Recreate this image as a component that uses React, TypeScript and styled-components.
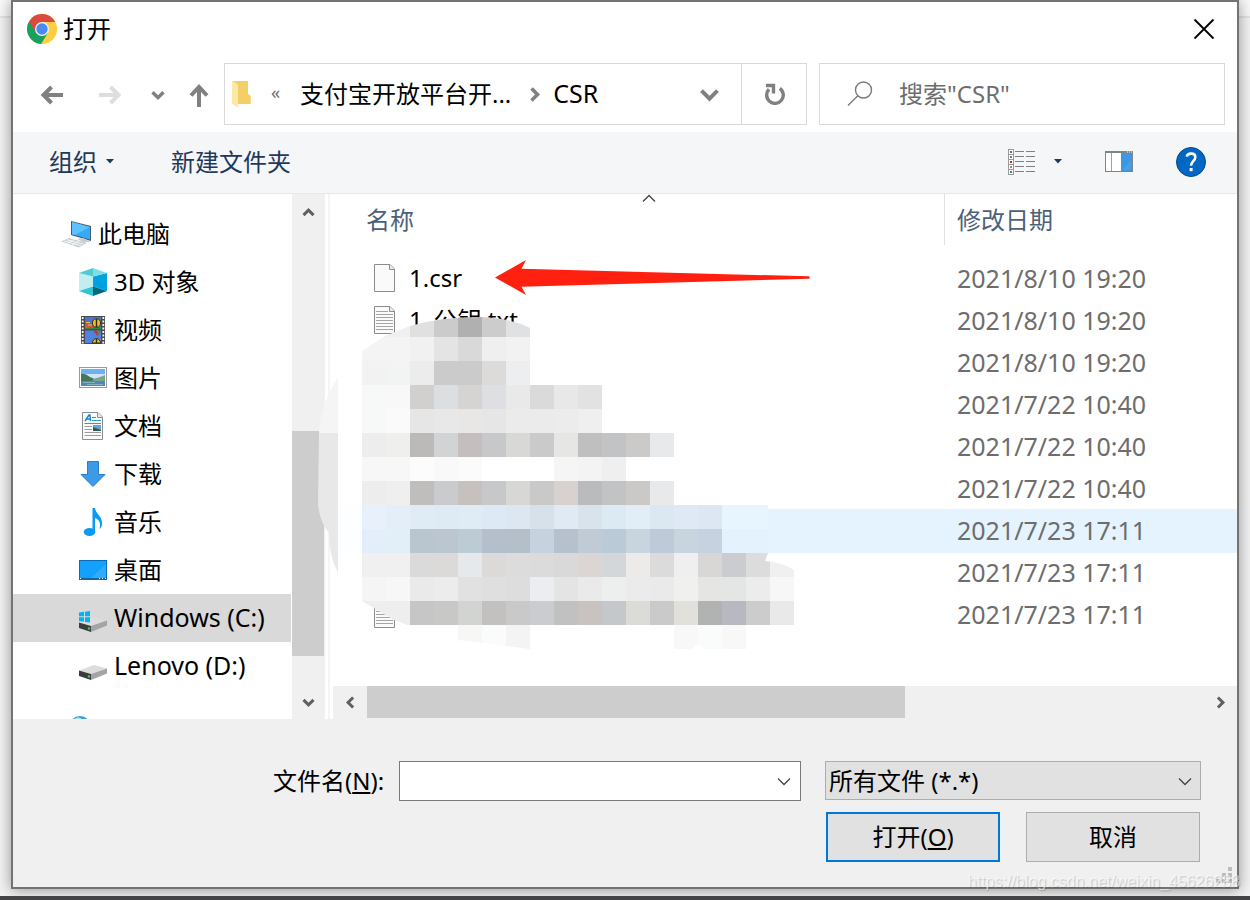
import React from "react";
import styled, { createGlobalStyle } from "styled-components";

const GlobalStyle = createGlobalStyle`
  * { box-sizing: border-box; }
  body {
    margin: 0;
    background: #f4f4f4;
    font-family: "Noto Sans", "Noto Sans CJK SC", sans-serif;
    font-size: 24px;
    line-height: 32px;
    color: #000;
  }
  button, input, select { font: inherit; color: inherit; margin: 0; border-radius: 0; }
  button { padding: 0; border: 0; background: none; }
  svg { display: block; flex: none; }
`;

const Page = styled.div`
  position: relative;
  display: flex;
  flex-direction: column;
  height: 100vh;
  padding: 0 11px 7px;
  border-bottom: 4px solid #444446;
  background: linear-gradient(#f9f9f9 16px, #e4e4e4 16px, #e4e4e4 18px, #f3f3f3 18px);
  overflow: hidden;
`;

const Dialog = styled.section`
  flex: 1;
  min-height: 0;
  display: flex;
  flex-direction: column;
  border: 2px solid #737373;
  background: #fff;
  box-shadow: 0 1px 14px rgba(0, 0, 0, 0.4);
`;

const TitleBar = styled.header`
  display: flex;
  align-items: center;
  gap: 6px;
  height: 54px;
  padding: 0 22px 0 14px;
`;

const Title = styled.h1`
  flex: 1;
  margin: 0;
  font-size: 24px;
  font-weight: 400;
`;

const NavBar = styled.nav`
  display: flex;
  align-items: center;
  margin: 7px 0;
  padding: 0 12px 0 10px;
`;

const NavButton = styled.button<{ $width: number }>`
  display: flex;
  align-items: center;
  justify-content: center;
  width: ${(p) => p.$width}px;
  height: 62px;
  padding-top: 2px;
`;

const AddressBar = styled.div`
  flex: 1;
  display: flex;
  align-items: center;
  height: 62px;
  margin: 0 12px 0 3px;
  padding-left: 7px;
  border: 1px solid #d9d9d9;
`;

const Overflow = styled.button`
  width: 49px;
  padding-bottom: 4px;
  font-size: 18px;
  color: #6d6d6d;
`;

const Crumb = styled.button<{ $latin?: boolean }>`
  font-size: ${(p) => (p.$latin ? 25 : 24)}px;
  line-height: ${(p) => (p.$latin ? 30 : 32)}px;
  padding-bottom: ${(p) => (p.$latin ? 2 : 0)}px;
  white-space: nowrap;
`;

const CrumbArrow = styled.span`
  display: flex;
  justify-content: center;
  width: 42px;
  padding-left: 4px;
`;

const AddressDrop = styled.button`
  margin-left: auto;
  padding: 22px;
`;

const Refresh = styled.button`
  display: flex;
  align-items: center;
  justify-content: center;
  width: 65px;
  height: 60px;
  border-left: 1px solid #d9d9d9;
`;

const SearchBox = styled.label`
  display: flex;
  align-items: center;
  gap: 26px;
  width: 34%;
  max-width: 406px;
  height: 62px;
  padding-left: 27px;
  border: 1px solid #d9d9d9;
`;

const SearchInput = styled.input`
  flex: 1;
  min-width: 0;
  padding: 0;
  border: 0;
  outline: 0;
  background: none;
  &::placeholder { color: #6d6d6d; opacity: 1; }
`;

const ToolBar = styled.div`
  display: flex;
  align-items: center;
  height: 62px;
  padding: 0 31px 2px 36px;
  border-bottom: 1px solid #e6e8ea;
  background: #f5f6f7;
  color: #1e395b;
`;

const ToolButton = styled.button<{ $gap: number }>`
  display: flex;
  align-items: center;
  gap: 9px;
  margin-right: ${(p) => p.$gap}px;
`;

const ToolSpacer = styled.span`
  flex: 1;
`;

const Body = styled.main`
  position: relative;
  flex: 1;
  min-height: 0;
  display: flex;
`;

const Sidebar = styled.ul`
  width: 279px;
  margin: 0;
  padding: 16px 1px 0 0;
  list-style: none;
  overflow: hidden;
`;

const TreeItem = styled.li<{ $root?: boolean; $selected?: boolean; $latin?: boolean }>`
  display: flex;
  align-items: center;
  gap: ${(p) => (p.$root ? 6 : 7)}px;
  height: 48px;
  padding-left: ${(p) => (p.$root ? 48 : 66)}px;
  background: ${(p) => (p.$selected ? "#d9d9d9" : "transparent")};
  font-size: ${(p) => (p.$latin ? 25 : 24)}px;
  white-space: nowrap;
`;

const NetworkItem = styled(TreeItem)`
  margin-top: 16px;
`;

const PlaceName = styled.span<{ $latin?: boolean }>`
  padding-bottom: ${(p) => (p.$latin ? 2 : 0)}px;
`;

const VScroll = styled.div`
  display: flex;
  flex-direction: column;
  width: 33px;
  background: #f0f0f0;
`;

const ScrollButton = styled.button<{ $tall?: boolean }>`
  display: flex;
  align-items: center;
  justify-content: center;
  flex: none;
  width: 34px;
  height: ${(p) => (p.$tall ? 36 : 33)}px;
`;

const VScrollButton = styled(ScrollButton)`
  width: 33px;
`;

const TrackPart = styled.div<{ $grow: number; $thumb?: boolean }>`
  flex: ${(p) => p.$grow} 0 0;
  background: ${(p) => (p.$thumb ? "#cdcdcd" : "transparent")};
`;

const VThumb = styled(TrackPart)`
  margin-right: 1px;
`;

const HThumb = styled(TrackPart)`
  margin-bottom: 1px;
`;

const Splitter = styled.div`
  width: 8px;
  border-left: 3px solid #fff;
  border-right: 3px solid #fff;
  background: #f5f5f5;
`;

const FilePane = styled.div`
  flex: 1;
  min-width: 0;
  display: flex;
  flex-direction: column;
`;

const TableArea = styled.div`
  flex: 1;
  min-height: 0;
  padding-left: 21px;
  overflow: hidden;
`;

const FileTable = styled.table`
  width: 100%;
  table-layout: fixed;
  border-collapse: separate;
  border-spacing: 0;
`;

const HeadCell = styled.th<{ $date?: boolean }>`
  position: relative;
  width: ${(p) => (p.$date ? "293px" : "auto")};
  height: 63px;
  padding: 0;
  vertical-align: top;
  text-align: left;
  font-weight: 400;
  color: #4c607a;
`;

const HeadLabel = styled.div<{ $date?: boolean }>`
  height: 51px;
  padding: 10px 0 0 12px;
  border-left: ${(p) => (p.$date ? "1px solid #e2e2e2" : "0")};
`;

const SortMark = styled.span`
  position: absolute;
  top: 0;
  left: 50%;
  margin-left: -7px;
`;

const FileRow = styled.tr<{ $hot?: boolean }>`
  background: ${(p) => (p.$hot ? "#e5f3ff" : "transparent")};
  box-shadow: ${(p) => (p.$hot ? "0 1px 0 1px #e5f3ff" : "none")};
`;

const Cell = styled.td<{ $date?: boolean }>`
  height: 42px;
  padding: 0 0 0 ${(p) => (p.$date ? 13 : 20)}px;
  font-size: ${(p) => (p.$date ? 25 : 24)}px;
  color: ${(p) => (p.$date ? "#6d6d6d" : "#000")};
`;

const FileName = styled.div`
  display: flex;
  align-items: center;
  gap: 13px;
`;

const HScroll = styled.div`
  display: flex;
  height: 33px;
  background: #f0f0f0;
`;

const Markup = styled.svg`
  position: absolute;
  top: 0;
  left: 0;
  pointer-events: none;
`;

const Footer = styled.form`
  position: relative;
  height: 168px;
  padding: 42px 36px 0 260px;
  background: #f0f0f0;
`;

const FieldRow = styled.div`
  display: flex;
  align-items: flex-start;
`;

const FieldLabel = styled.label`
  margin-right: 15px;
  line-height: 40px;
  white-space: nowrap;
`;

const NameBox = styled.div`
  flex: 1;
  display: flex;
  align-items: center;
  height: 40px;
  margin-right: 24px;
  padding-right: 9px;
  border: 1px solid #7a7a7a;
  background: #fff;
`;

const NameInput = styled.input`
  flex: 1;
  min-width: 0;
  border: 0;
  outline: 0;
  background: none;
`;

const TypeBox = styled.div`
  position: relative;
  width: 376px;
`;

const TypeSelect = styled.select`
  display: block;
  appearance: none;
  width: 100%;
  height: 39px;
  padding: 0 36px 0 3px;
  border: 1px solid #adadad;
  background: #e1e1e1;
`;

const TypeArrow = styled.span`
  position: absolute;
  top: 16px;
  right: 9px;
  pointer-events: none;
`;

const ButtonRow = styled.div`
  display: flex;
  justify-content: flex-end;
  gap: 26px;
  margin-top: 11px;
  padding-right: 1px;
`;

const PushButton = styled.button<{ $primary?: boolean }>`
  width: 174px;
  height: 50px;
  border: ${(p) => (p.$primary ? "2px solid #0078d7" : "1px solid #adadad")};
  background: #e1e1e1;
`;

const Grip = styled.svg`
  position: absolute;
  right: 5px;
  bottom: 4px;
`;

const Watermark = styled.span`
  position: absolute;
  right: 10px;
  bottom: 5px;
  font-family: "Liberation Sans", sans-serif;
  font-size: 16px;
  line-height: 18px;
  color: rgba(255, 255, 255, 0.6);
  text-shadow: 1px 1px 1px rgba(0, 0, 0, 0.18);
`;

const ChromeLogo = () => (
  <svg width="30" height="30" viewBox="0 0 30 30">
    <circle cx="15" cy="15" r="15" fill="#ffcd40" />
    <path d="M15 15 L2 7.500 A15 15 0 0 0 14 30 L21.500 18.500 Z" fill="#18a05e" />
    <path d="M2 7.500 A15 15 0 0 1 28.200 8 L15 8 L9 18.500 Z" fill="#db4a3f" />
    <path d="M15 8 H28.200 A15 15 0 0 1 14.500 30 L21 18.500 Z" fill="#ffcd40" />
    <circle cx="15" cy="15" r="7" fill="#f1f1f1" />
    <circle cx="15" cy="15" r="5.700" fill="#4a8af5" />
  </svg>
);

const ArrowLeft = ({ color, flip }: { color: string; flip?: boolean }) => (
  <svg width="24" height="20" viewBox="0 0 24 20" fill="none" stroke={color} strokeWidth="4">
    <path d={flip ? "M1 10 H20 M12.500 2 L20.500 10 L12.500 18" : "M23 10 H4 M11.500 2 L3.500 10 L11.500 18"} />
  </svg>
);

const ArrowUp = () => (
  <svg width="20" height="24" viewBox="0 0 20 24" fill="none" stroke="#808080" strokeWidth="4">
    <path d="M10 24 V5 M2 12.500 L10 4 L18 12.500" />
  </svg>
);

type Dir = "up" | "down" | "left" | "right";
const angle: Record<Dir, number> = { down: 0, left: 90, up: 180, right: 270 };

const Chevron = ({ dir, size, width, color = "#606060" }: { dir: Dir; size: number; width: number; color?: string }) => (
  <svg width={size} height={size} viewBox={`0 0 ${size} ${size}`} fill="none" stroke={color} strokeWidth={width}>
    <path
      transform={`rotate(${angle[dir]} ${size / 2} ${size / 2})`}
      d={`M1.500 ${size * 0.3} L${size / 2} ${size * 0.3 + size / 2 - 1.5} L${size - 1.5} ${size * 0.3}`}
    />
  </svg>
);

const ThinChevron = ({ up }: { up?: boolean }) => (
  <svg width="14" height="9" viewBox="0 0 14 9" fill="none" stroke="#444" strokeWidth="1.300">
    <path d={up ? "M1 7.500 L7 1.500 L13 7.500" : "M1 1.500 L7 7.500 L13 1.500"} />
  </svg>
);

const Caret = () => (
  <svg width="8" height="5" viewBox="0 0 8 5">
    <path d="M0 0 H8 L4 4.500 Z" fill="#1e395b" />
  </svg>
);

const FolderIcon = () => (
  <svg width="19" height="28" viewBox="0 0 19 28">
    <path d="M1 1 H16 V14 L18.500 16 V24 H1 Z" fill="#f6d370" />
    <path d="M4 1 H16 V14 L18.500 16 V24 H6 V5 Z" fill="#f4cf68" />
    <path d="M0 1 L6 5 V28 L0 24 Z" fill="#ffe9a9" />
  </svg>
);

const RefreshIcon = () => (
  <svg width="22" height="22" viewBox="0 0 22 22" fill="none" stroke="#808080">
    <path d="M16.800 5.300 A8.300 8.300 0 1 1 6 6.300" strokeWidth="3.400" />
    <path d="M3 2.500 H10.500 V10.500" strokeWidth="3.400" />
  </svg>
);

const SearchIcon = () => (
  <svg width="26" height="26" viewBox="0 0 26 26" fill="none" stroke="#7a7a7a" strokeWidth="1.400">
    <circle cx="16.500" cy="9" r="8" />
    <path d="M10.800 14.700 L1 24.500" />
  </svg>
);

const ViewIcon = () => (
  <svg width="28" height="26" viewBox="0 0 28 26">
    {[0, 1, 2, 3, 4].map((i) => (
      <g key={i}>
        <rect x="0.500" y={0.5 + i * 5} width="5" height="5" fill="#fff" stroke="#9a9a9a" />
        <rect x="2" y={2 + i * 5} width="2" height="2" fill={["#3a7a94", "#7a7a7a", "#c02c18", "#86a05c", "#3a8a8a"][i]} />
        <path d={`M7 ${2.5 + i * 5} H16 M18 ${2.5 + i * 5} H27`} stroke="#808080" />
      </g>
    ))}
  </svg>
);

const PaneIcon = () => (
  <svg width="28" height="21" viewBox="0 0 28 21">
    <rect x="0.500" y="0.500" width="27" height="20" fill="#fff" stroke="#7c858a" />
    <path d="M0 1 H28" stroke="#7c858a" strokeWidth="2" />
    <path d="M22 1 h1 M24 1 h1 M26 1 h1" stroke="#fff" />
    <path d="M6.500 2 V20" stroke="#a0a0a0" />
    <rect x="16" y="2" width="11" height="18" fill="#3e97e2" />
    <path d="M17 19 L26 9 V19 Z" fill="#479fe6" />
  </svg>
);

const HelpIcon = () => (
  <svg width="30" height="30" viewBox="0 0 30 30" fill="none">
    <circle cx="15" cy="15" r="14.500" fill="#0067c5" stroke="#0a4a86" />
    <path d="M10.800 9.600 C11.500 5.600 19.400 5.400 19.300 10.200 C19.200 14 15 14.300 15 18.800" stroke="#fff" strokeWidth="2.600" />
    <rect x="13.600" y="21" width="3" height="3.200" fill="#fff" />
  </svg>
);

const ComputerIcon = () => (
  <svg width="31" height="28" viewBox="0 0 31 28">
    <path d="M10 1 L30 6 V21 L10 15 Z" fill="#4a5a66" />
    <path d="M11 2 L29 7 V19.500 L11 14.300 Z" fill="#33aafa" />
    <path d="M11 2 L29 7 L14 15 L11 14.300 Z" fill="#5dc0ff" />
    <path d="M16 19 L22 18 L30 22 L22 22 Z" fill="#c5ccd2" />
    <path d="M0 21.500 L8 18 L26 23 L18 27.500 Z" fill="#c9ced2" />
    <path d="M3 21 L20 25.700 M6 19.800 L23 24.300 M6 23.500 L13 19.500 M11 25 L18 21" stroke="#f7f7f7" />
  </svg>
);

const CubeIcon = () => (
  <svg width="28" height="28" viewBox="0 0 28 28">
    <path d="M0 5 L14 8.500 V18.500 L0 23 Z" fill="#c3eeef" />
    <path d="M14 8.500 L28 5 V23 L14 18.500 Z" fill="#00a3dd" />
    <path d="M0 5 L14 0 V8.500 Z" fill="#50cbd6" />
    <path d="M14 0 L28 5 L14 8.500 Z" fill="#7fdde4" />
    <path d="M0 23 L14 18.500 V28 Z" fill="#2fc5d5" />
    <path d="M14 18.500 L28 23 L14 28 Z" fill="#00667c" />
  </svg>
);

const VideoIcon = () => (
  <svg width="28" height="28" viewBox="0 0 28 28">
    <rect x="2" width="24" height="28" fill="#4a4a4a" />
    <rect x="6" y="1" width="16" height="12" fill="#4a74d6" />
    <rect x="6" y="14.500" width="16" height="12.500" fill="#4f82e2" />
    <path d="M3.700 1 V28 M24.300 1 V28" stroke="#f4f4f4" strokeWidth="1.800" strokeDasharray="2 1.500" />
    <path d="M6 9 l3 -2 3 3 2 -1 V13 H6 Z" fill="#e0504a" />
    <path d="M6 12.500 Q15 10.500 22 11.500 V13 H6 Z" fill="#2f8b3c" />
    <path d="M7 6.500 H11 M9 9 H13" stroke="#f2c230" />
    <ellipse cx="17.500" cy="7" rx="4" ry="4.200" fill="#f3c713" stroke="#3a2c10" />
    <path d="M17.500 3 V11" stroke="#2b2b2b" strokeWidth="1.500" />
    <path d="M14 14.500 H22 L18.500 20 Z" fill="#c9322c" />
    <path d="M18 14.500 H22 L18.500 20 Z" fill="#2a9a50" />
    <path d="M13.500 27 A4 4.500 0 0 1 21.500 27 Z" fill="#f3c713" stroke="#3a2c10" />
    <path d="M17.500 23 V27" stroke="#2b2b2b" strokeWidth="1.500" />
  </svg>
);

const PictureIcon = () => (
  <svg width="28" height="22" viewBox="0 0 28 22">
    <rect x="0.500" y="0.500" width="27" height="20" fill="#fff" stroke="#9b9b9b" />
    <rect x="2" y="2" width="24" height="9" fill="#6db1f4" />
    <path d="M2 7 H26 V14 H2 Z" fill="#cfe4f5" />
    <path d="M2 7 Q6 6 11 10 L20 14 H2 Z" fill="#47765a" />
    <path d="M14 12 Q22 10 26 8 V14 H14 Z" fill="#7aa58d" />
    <rect x="2" y="14" width="24" height="5" fill="#4f88b0" />
    <path d="M4 15.500 H16 M8 17.500 H24" stroke="#7fb0cc" />
  </svg>
);

const DocumentIcon = () => (
  <svg width="28" height="28" viewBox="0 0 28 28" fill="none">
    <path d="M3.500 0.500 H19 L23.500 5 V27.500 H3.500 Z" fill="#fafafa" stroke="#8c8c8c" />
    <path d="M18.500 0.500 V5.500 H23.500" stroke="#8c8c8c" fill="#e8e8e8" />
    <path d="M6 9 L10 3 H11 L11.500 9 M8 7 H11.500" stroke="#1e88c7" strokeWidth="1.500" />
    <path d="M13 5.500 H17 M13 8.500 H22 M5.500 11.500 H22" stroke="#2a9bd8" />
    <path d="M5.500 14.500 H13 M5.500 17.500 H13 M5.500 20.500 H22 M5.500 23.500 H22" stroke="#9c9c9c" />
    <rect x="14" y="13" width="8" height="6" fill="#6fa3d0" />
    <path d="M14 15 L18 16.500 L22 18 V19 H14 Z" fill="#2e5c50" />
  </svg>
);

const DownloadIcon = () => (
  <svg width="28" height="28" viewBox="0 0 28 28">
    <path d="M8.500 1.500 H19.500 V14.500 H26 L14 26.500 L2 14.500 H8.500 Z" fill="#3d9ae6" stroke="#2b7fc9" />
  </svg>
);

const MusicIcon = () => (
  <svg width="28" height="28" viewBox="0 0 28 28">
    <ellipse cx="10.500" cy="24" rx="5.800" ry="4" fill="#0b9af2" />
    <path d="M13.500 24 V0 H16 C16.500 6 24 8 23 17 C22.600 19 21.500 20.500 20.500 21 C22 16 21 12 16 10 V24 Z" fill="#0b9af2" />
  </svg>
);

const DesktopIcon = () => (
  <svg width="28" height="20" viewBox="0 0 28 20">
    <rect x="0.500" y="0.500" width="27" height="19" fill="#14a0ff" stroke="#0a6cb0" />
    <path d="M12 18 L27 4 V18 Z" fill="#2fabff" />
    <path d="M1 18.500 H27" stroke="#0b65a8" />
    <path d="M1 18.500 h1 M20 18.500 h1 M23 18.500 h1 M26 18.500 h1" stroke="#fff" />
  </svg>
);

const DriveIcon = ({ system }: { system?: boolean }) => (
  <svg width="28" height="28" viewBox="0 0 28 28">
    <path d="M0 18.500 L15 13 L28 16.500 L12 22 Z" fill="#dcdcde" />
    <path d="M12 22 L28 16.500 V21.500 L12 28 Z" fill="#a4a4a8" />
    <path d="M0 18.500 L12 22 V28 L0 24 Z" fill="#3c3c3e" />
    <circle cx="10" cy="24.500" r="1.200" fill="#31d843" />
    {system && <path d="M0 8.500 L5 7.800 V12.300 H0 Z M6 7.700 L11 7 V12.300 H6 Z M0 13.300 H5 V17.800 L0 17 Z M6 13.300 H11 V18.600 L6 18 Z" fill="#00b4f1" />}
  </svg>
);

const NetworkIcon = () => (
  <svg width="30" height="28" viewBox="0 0 30 28">
    <circle cx="19" cy="11" r="11" fill="#3f9fcb" />
    <path d="M10 6 Q18 -3 22 5" fill="#a8dcec" />
  </svg>
);

const FileIcon = ({ lines }: { lines?: boolean }) => (
  <svg width="22" height="28" viewBox="0 0 22 28" fill="none">
    <path d="M0.500 0.500 H16 L20.500 5 V27.500 H0.500 Z" fill="#fafafa" stroke="#8c8c8c" />
    <path d="M15.500 0.500 V5.500 H20.500" stroke="#8c8c8c" fill="#ececec" />
    {lines && (
      <path d="M2 5.500 H14 M2 8.500 H19 M2 11.500 H19 M2 14.500 H19 M2 17.500 H19 M2 20.500 H19 M2 23.500 H19" stroke="#a4a4a4" />
    )}
  </svg>
);

const places: { label: string; icon: React.ReactNode; root?: boolean; selected?: boolean; latin?: boolean }[] = [
  { label: "此电脑", icon: <ComputerIcon />, root: true },
  { label: "3D 对象", icon: <CubeIcon /> },
  { label: "视频", icon: <VideoIcon /> },
  { label: "图片", icon: <PictureIcon /> },
  { label: "文档", icon: <DocumentIcon /> },
  { label: "下载", icon: <DownloadIcon /> },
  { label: "音乐", icon: <MusicIcon /> },
  { label: "桌面", icon: <DesktopIcon /> },
  { label: "Windows (C:)", icon: <DriveIcon system />, selected: true, latin: true },
  { label: "Lenovo (D:)", icon: <DriveIcon />, latin: true },
];

const files: { name: string; date: string; hot?: boolean }[] = [
  { name: "1.csr", date: "2021/8/10 19:20" },
  { name: "1_公钥.txt", date: "2021/8/10 19:20" },
  { name: "", date: "2021/8/10 19:20" },
  { name: "", date: "2021/7/22 10:40" },
  { name: "", date: "2021/7/22 10:40" },
  { name: "", date: "2021/7/22 10:40" },
  { name: "", date: "2021/7/23 17:11", hot: true },
  { name: "", date: "2021/7/23 17:11" },
  { name: "", date: "2021/7/23 17:11" },
];

// Pixelated patch over the file names: one string per 24px row, "-" is an empty cell.
const mosaic = [
  "f4f4f4 f0f0f0 e0e0e0 cbcbcb b0b0b0 cccccc dfe1e3",
  "f4f4f4 f4f4f4 f1f1f1 e4e4e4 d9d9d9 efefef f2f2f2",
  "f2f2f2 f2f4f3 ececec cbcbcb cbcbcb dddbd9 eceeef",
  "f7f9f8 f8f8f8 d1d0ce dcdfe2 d6d4d2 dddfe2 e9e9e9 dadada e8e8e8 e2e2e2",
  "f6f9f8 fafafa e6e6e6 e8e8e8 e9e7e5 e6e6e6 ebebeb ebebeb ececec efefef",
  "ededed efefed bbbab8 d1d3d5 c4bfbe c7c8ca d8d9d6 cacaca e6e6e4 bfbfbf c1c3c5 cccac8 e8e9eb",
  "f7f7f7 f7f7f7 fcfcfc f9f9f9 fbfbfb ffffff ffffff ffffff f5f5f5 f3f3f3 efefef",
  "ededed efefef bfbebc cacbcf c6c0bf c7c8ca d7d7d5 c9c9c9 d7d2cf babbbd c2c3c5 cbc9c7 e8e9eb",
  "e8f1fb e4eef9 dfebf5 deebf5 dfecf6 dde9f4 dce7f2 d7e1ea e0eaf5 d9e3eb dceaf4 e1eef8 dbe7f1 dfe9f5 dde7f3 e7f5ff e7f5ff",
  "e3eefa e3eff8 b9c5cf bbc6d1 bccbd4 b4bfcb b4bfca c6d2e0 b6c1cd c0cbd5 bbcad7 c8d5df bfcad9 c8d4de c6d2e0 e4f2fe e4f2fe",
  "f0f0f0 f0f0f0 dadada dbdad8 e6e9eb dbdad8 dcdcdc dbdbdb d9d9d9 dbd6d4 d3d7da ecebe9 dbdbdb efefef d9d7d5 cbccd0 dcdcdc f0f0f0",
  "f5f5f5 f7f7f7 eaeaea ececec e1e1e1 dfdfdf dddddd ecedf0 e4e4e4 eaeaea ecefed ebebeb eaeaea f0f0ee e5e5e3 e3e6e4 ececec f7f7f7",
  "eeeeee eeeeee c6c6c6 c8c9c6 d2d4d2 c2c1bf c9c9c9 cbccd0 c1c1c1 c8c2c1 c4c8cb dbdbd8 cacaca e1e0db b0b3b1 b8b9c0 cccccc e9e9e9",
  "- - - - f7f7f5 fafcfb f4f4f4 - - - - - - f8f8f8 fafcfb f8f8f8",
].map((row) => row.split(" "));

const Annotations = () => (
  <Markup width="820" height="480" viewBox="13 194 820 480" aria-hidden="true">
    <defs>
      <clipPath id="brush">
        <path d="M362 351 L385 336 L410 326 Q440 317 480 317 Q510 318 530 328 H768 V553 L765 561 Q782 562 794 570 V650 H705 L698 644 L692 649 H530 Q500 645 458 640 V626 H410 L394 620 L382 613 L362 601 Z" />
      </clipPath>
    </defs>
    <path d="M338 377 Q320 405 319 433 H338 Z" fill="#f5f5f5" />
    <path d="M319 433 H338 V573 Q329 556 329 533 Q319 521 318 503 Z" fill="#e8e8e8" />
    <rect x="338" y="505" width="24" height="48" fill="#fcfeff" />
    <g clipPath="url(#brush)" shapeRendering="crispEdges">
      {mosaic.map((row, r) =>
        row.map((color, c) =>
          color === "-" ? null : (
            <rect key={`${r}-${c}`} x={362 + c * 24} y={313 + r * 24} width="24" height="24" fill={`#${color}`} />
          )
        )
      )}
    </g>
    <path d="M495 277.500 L526 260 L521.500 268.800 L809 276.300 Q810.500 277.500 809 278.800 L521.500 286.800 L526 295 Z" fill="#ff2010" />
  </Markup>
);

export default function App() {
  return (
    <Page>
      <GlobalStyle />
      <Dialog aria-label="打开">
        <TitleBar>
          <ChromeLogo />
          <Title>打开</Title>
          <button type="button" aria-label="关闭">
            <svg width="22" height="22" viewBox="0 0 22 22" fill="none" stroke="#000" strokeWidth="1.800">
              <path d="M1.500 1.500 L20.500 20.500 M20.500 1.500 L1.500 20.500" />
            </svg>
          </button>
        </TitleBar>

        <NavBar>
          <NavButton type="button" $width={58} aria-label="后退"><ArrowLeft color="#808080" /></NavButton>
          <NavButton type="button" $width={58} aria-label="前进"><ArrowLeft color="#dedede" flip /></NavButton>
          <NavButton type="button" $width={38} aria-label="最近"><Chevron dir="down" size={14} width={3.4} color="#808080" /></NavButton>
          <NavButton type="button" $width={44} aria-label="向上"><ArrowUp /></NavButton>
          <AddressBar>
            <FolderIcon />
            <Overflow type="button">«</Overflow>
            <Crumb type="button">支付宝开放平台开...</Crumb>
            <CrumbArrow><Chevron dir="right" size={15} width={3.6} color="#808080" /></CrumbArrow>
            <Crumb type="button" $latin>CSR</Crumb>
            <AddressDrop type="button" aria-label="展开"><Chevron dir="down" size={19} width={4} color="#808080" /></AddressDrop>
            <Refresh type="button" aria-label="刷新"><RefreshIcon /></Refresh>
          </AddressBar>
          <SearchBox>
            <SearchIcon />
            <SearchInput type="text" placeholder={'搜索"CSR"'} aria-label="搜索" />
          </SearchBox>
        </NavBar>

        <ToolBar>
          <ToolButton type="button" $gap={57}>组织<Caret /></ToolButton>
          <ToolButton type="button" $gap={0}>新建文件夹</ToolButton>
          <ToolSpacer />
          <ToolButton type="button" $gap={18} aria-label="视图"><ViewIcon /></ToolButton>
          <ToolButton type="button" $gap={43} aria-label="更多视图"><Caret /></ToolButton>
          <ToolButton type="button" $gap={43} aria-label="预览窗格"><PaneIcon /></ToolButton>
          <ToolButton type="button" $gap={0} aria-label="帮助"><HelpIcon /></ToolButton>
        </ToolBar>

        <Body>
          <Sidebar>
            {places.map((p) => (
              <TreeItem key={p.label} $root={p.root} $selected={p.selected} $latin={p.latin}>
                {p.icon}
                <PlaceName $latin={p.latin}>{p.label}</PlaceName>
              </TreeItem>
            ))}
            <NetworkItem $root><NetworkIcon /></NetworkItem>
          </Sidebar>
          <VScroll>
            <VScrollButton type="button" $tall aria-label="向上滚动"><Chevron dir="up" size={13} width={3} /></VScrollButton>
            <TrackPart $grow={201} />
            <VThumb $grow={225} $thumb />
            <TrackPart $grow={30} />
            <VScrollButton type="button" aria-label="向下滚动"><Chevron dir="down" size={13} width={3} /></VScrollButton>
          </VScroll>
          <Splitter />
          <FilePane>
            <TableArea>
              <FileTable>
                <thead>
                  <tr>
                    <HeadCell><HeadLabel>名称</HeadLabel><SortMark><ThinChevron up /></SortMark></HeadCell>
                    <HeadCell $date><HeadLabel $date>修改日期</HeadLabel></HeadCell>
                  </tr>
                </thead>
                <tbody>
                  {files.map((f, i) => (
                    <FileRow key={i} $hot={f.hot}>
                      <Cell><FileName><FileIcon lines={i > 0} />{f.name}</FileName></Cell>
                      <Cell $date>{f.date}</Cell>
                    </FileRow>
                  ))}
                </tbody>
              </FileTable>
            </TableArea>
            <HScroll>
              <ScrollButton type="button" aria-label="向左滚动"><Chevron dir="left" size={13} width={3} /></ScrollButton>
              <HThumb $grow={538} $thumb />
              <TrackPart $grow={298} />
              <ScrollButton type="button" aria-label="向右滚动"><Chevron dir="right" size={13} width={3} /></ScrollButton>
            </HScroll>
          </FilePane>
          <Annotations />
        </Body>

        <Footer onSubmit={(e) => e.preventDefault()}>
          <FieldRow>
            <FieldLabel htmlFor="file-name">文件名(<u>N</u>):</FieldLabel>
            <NameBox>
              <NameInput id="file-name" type="text" />
              <button type="button" aria-label="历史记录"><ThinChevron /></button>
            </NameBox>
            <TypeBox>
              <TypeSelect aria-label="文件类型" defaultValue="all">
                <option value="all">所有文件 (*.*)</option>
              </TypeSelect>
              <TypeArrow><ThinChevron /></TypeArrow>
            </TypeBox>
          </FieldRow>
          <ButtonRow>
            <PushButton type="submit" $primary>打开(<u>O</u>)</PushButton>
            <PushButton type="button">取消</PushButton>
          </ButtonRow>
          <Grip width="16" height="16" viewBox="0 0 16 16" fill="#bdbdbd">
            <path d="M12 0 h4 v4 h-4 Z M6 6 h4 v4 h-4 Z M12 6 h4 v4 h-4 Z M0 12 h4 v4 h-4 Z M6 12 h4 v4 h-4 Z M12 12 h4 v4 h-4 Z" />
          </Grip>
        </Footer>
      </Dialog>
      <Watermark>https://blog.csdn.net/weixin_45626288</Watermark>
    </Page>
  );
}
